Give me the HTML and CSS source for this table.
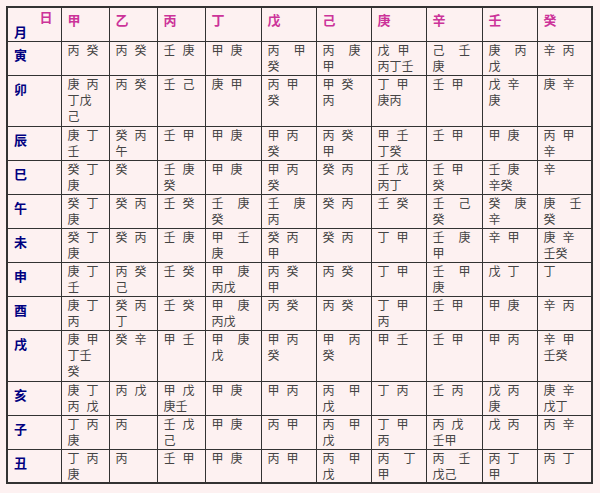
FILE: index.html
```html
<!DOCTYPE html>
<html lang="zh">
<head>
<meta charset="utf-8">
<title>月日天干表</title>
<link rel="stylesheet" href="styles.css">
</head>
<body>
<table class="grid">
<colgroup>
<col class="c0"><col class="c1"><col class="c2"><col class="c3"><col class="c4"><col class="c5"><col class="c6"><col class="c7"><col class="c8"><col class="c9"><col class="c10">
</colgroup>
<tr class="head">
<th class="corner"><div class="day">日</div><div class="month">月</div></th>
<th>甲</th><th>乙</th><th>丙</th><th>丁</th><th>戊</th><th>己</th><th>庚</th><th>辛</th><th>壬</th><th>癸</th>
</tr>
<tr>
<th class="br">寅</th>
<td>丙<i></i>癸</td><td>丙<i></i>癸</td><td>壬<i></i>庚</td><td>甲<i></i>庚</td><td>丙<i class="w"></i>甲<br>癸</td><td>丙<i class="w"></i>庚<br>甲</td><td>戊<i class="m"></i>甲<br>丙丁壬</td><td>己<i class="w"></i>壬<br>庚</td><td>庚<i class="w"></i>丙<br>戊</td><td>辛<i></i>丙</td>
</tr>
<tr class="tall">
<th class="br">卯</th>
<td>庚<i></i>丙<br>丁戊<br>己</td><td>丙<i></i>癸</td><td>壬<i></i>己</td><td>庚<i></i>甲</td><td>丙<i></i>甲<br>癸</td><td>甲<i></i>癸<br>丙</td><td>丁<i></i>甲<br>庚丙</td><td>壬<i></i>甲</td><td>戊<i></i>辛<br>庚</td><td>庚<i></i>辛</td>
</tr>
<tr>
<th class="br">辰</th>
<td>庚<i></i>丁<br>壬</td><td>癸<i></i>丙<br>午</td><td>壬<i></i>甲</td><td>甲<i></i>庚</td><td>甲<i></i>丙<br>癸</td><td>丙<i></i>癸<br>甲</td><td>甲<i></i>壬<br>丁癸</td><td>壬<i></i>甲</td><td>甲<i></i>庚</td><td>丙<i></i>甲<br>辛</td>
</tr>
<tr>
<th class="br">巳</th>
<td>癸<i></i>丁<br>庚</td><td>癸</td><td>壬<i></i>庚<br>癸</td><td>甲<i></i>庚</td><td>甲<i></i>丙<br>癸</td><td>癸<i></i>丙</td><td>壬<i></i>戊<br>丙丁</td><td>壬<i></i>甲<br>癸</td><td>壬<i></i>庚<br>辛癸</td><td>辛</td>
</tr>
<tr>
<th class="br">午</th>
<td>癸<i></i>丁<br>庚</td><td>癸<i></i>丙</td><td>壬<i></i>癸</td><td>壬<i class="w"></i>庚<br>癸</td><td>壬<i class="w"></i>庚<br>丙</td><td>癸<i></i>丙</td><td>壬<i></i>癸</td><td>壬<i class="w"></i>己<br>癸</td><td>癸<i class="w"></i>庚<br>辛</td><td>庚<i class="w"></i>壬<br>癸</td>
</tr>
<tr>
<th class="br">未</th>
<td>癸<i></i>丁<br>庚</td><td>癸<i></i>丙</td><td>壬<i></i>庚</td><td>甲<i class="w"></i>壬<br>庚</td><td>癸<i></i>丙<br>甲</td><td>癸<i></i>丙</td><td>丁<i></i>甲</td><td>壬<i class="w"></i>庚<br>甲</td><td>辛<i></i>甲</td><td>庚<i></i>辛<br>壬癸</td>
</tr>
<tr>
<th class="br">申</th>
<td>庚<i></i>丁<br>壬</td><td>丙<i></i>癸<br>己</td><td>壬<i></i>癸</td><td>甲<i class="w"></i>庚<br>丙戊</td><td>丙<i></i>癸<br>甲</td><td>丙<i></i>癸</td><td>丁<i></i>甲</td><td>壬<i class="w"></i>甲<br>庚</td><td>戊<i></i>丁</td><td>丁</td>
</tr>
<tr>
<th class="br">酉</th>
<td>庚<i></i>丁<br>丙</td><td>癸<i></i>丙<br>丁</td><td>壬<i></i>癸</td><td>甲<i class="w"></i>庚<br>丙戊</td><td>丙<i></i>癸</td><td>丙<i></i>癸</td><td>丁<i></i>甲<br>丙</td><td>壬<i></i>甲</td><td>甲<i></i>庚</td><td>辛<i></i>丙</td>
</tr>
<tr class="tall">
<th class="br">戌</th>
<td>庚<i></i>甲<br>丁壬<br>癸</td><td>癸<i></i>辛</td><td>甲<i></i>壬</td><td>甲<i class="w"></i>庚<br>戊</td><td>甲<i></i>丙<br>癸</td><td>甲<i class="w"></i>丙<br>癸</td><td>甲<i></i>壬</td><td>壬<i></i>甲</td><td>甲<i></i>丙</td><td>辛<i></i>甲<br>壬癸</td>
</tr>
<tr>
<th class="br">亥</th>
<td>庚<i></i>丁<br>丙<i></i>戊</td><td>丙<i></i>戊</td><td>甲<i></i>戊<br>庚壬</td><td>甲<i></i>庚</td><td>甲<i></i>丙</td><td>丙<i class="w"></i>甲<br>戊</td><td>丁<i></i>丙</td><td>壬<i></i>丙</td><td>戊<i></i>丙<br>庚</td><td>庚<i></i>辛<br>戊丁</td>
</tr>
<tr>
<th class="br">子</th>
<td>丁<i></i>丙<br>庚</td><td>丙</td><td>壬<i></i>戊<br>己</td><td>甲<i></i>庚</td><td>丙<i></i>甲</td><td>丙<i class="w"></i>甲<br>戊</td><td>丁<i></i>甲<br>丙</td><td>丙<i></i>戊<br>壬甲</td><td>戊<i></i>丙</td><td>丙<i></i>辛</td>
</tr>
<tr>
<th class="br">丑</th>
<td>丁<i></i>丙<br>庚</td><td>丙</td><td>壬<i></i>甲</td><td>甲<i></i>庚</td><td>丙<i></i>甲</td><td>丙<i class="w"></i>甲<br>戊</td><td>丙<i class="w"></i>丁<br>甲</td><td>丙<i class="w"></i>壬<br>戊己</td><td>丙<i></i>丁<br>甲</td><td>丙<i></i>丁</td>
</tr>
</table>
</body>
</html>
```

FILE: styles.css
```css
html, body {
  margin: 0;
  background: #fdf1f1;
}
body {
  padding: 6px 0 0 6px;
  font-family: "Noto Sans CJK SC", "Noto Sans CJK JP", sans-serif;
}
.grid {
  border-collapse: collapse;
  table-layout: fixed;
  width: 586px;
  border: 2px solid #333;
}
.c0 { width: 54px; }
.c1, .c2, .c3 { width: 48px; }
.c4 { width: 56px; }
.c5, .c6, .c7 { width: 55px; }
.c8 { width: 56px; }
.c9, .c10 { width: 55px; }

.grid tr { height: 34px; }
.grid tr.tall { height: 51px; }

.grid td, .grid th {
  border: 1px solid #333;
  vertical-align: top;
  text-align: left;
  padding: 0 2px 0 6px;
  font-size: 12px;
  line-height: 16px;
  color: #444;
  font-weight: normal;
  white-space: nowrap;
}
.grid td i {
  display: inline-block;
  width: 7px;
}
.grid td i.m { width: 8px; }
.grid td i.w { width: 14px; }

.head th {
  color: #cc3399;
  font-weight: bold;
  font-size: 13px;
  padding-top: 4px;
}
.grid th.br {
  color: #000080;
  font-weight: bold;
  font-size: 13px;
  padding-top: 5px;
}
.grid th.corner {
  padding: 1px 8px 0 6px;
  line-height: 15px;
}
.corner .day {
  text-align: right;
  color: #cc3399;
}
.corner .month {
  color: #000080;
}
```
